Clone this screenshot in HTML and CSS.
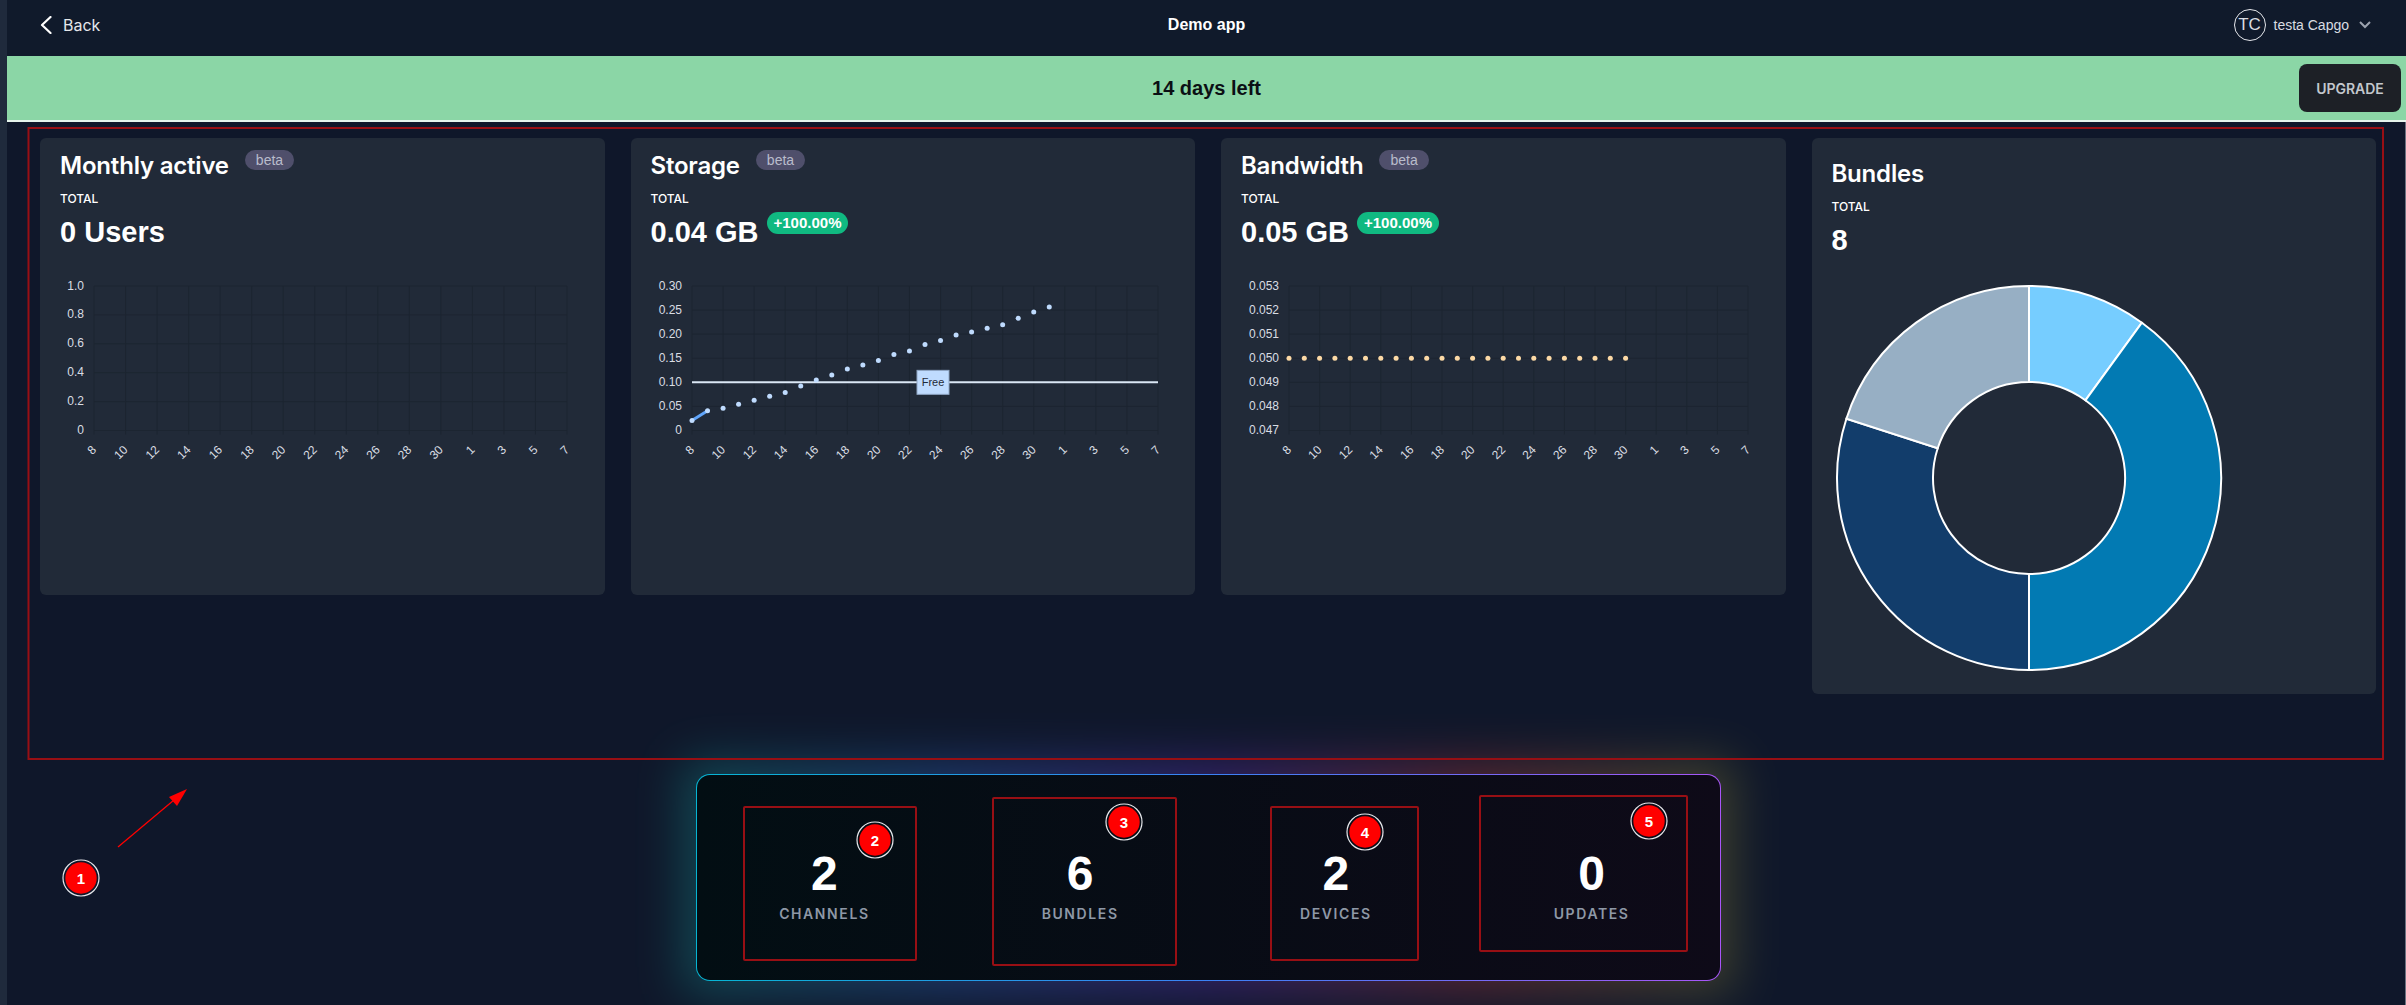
FILE: index.html
```html
<!DOCTYPE html>
<html lang="en">
<head>
    <meta charset="UTF-8">
    <meta name="viewport" content="width=device-width, initial-scale=1.0">
    <title>Demo app</title>
    <link rel="stylesheet" href="styles.css">
</head>
<body>
<div class="app">
    <aside class="sidebar"></aside>
    <main class="main">
        <header class="topbar">
            <a class="back" href="#">
                <svg width="12" height="18" viewBox="0 0 12 18"><path d="M10.5 1 2 9l8.500 8" fill="none" stroke="#fff" stroke-width="2.200" stroke-linecap="round" stroke-linejoin="round"/></svg>
                <span>Back</span>
            </a>
            <div class="app-name">Demo app</div>
            <div class="user">
                <span class="avatar">TC</span>
                <span class="user-name">testa Capgo</span>
                <svg width="12" height="8" viewBox="0 0 12 8"><path d="M1 1l5 5 5-5" fill="none" stroke="#9ca3af" stroke-width="2"/></svg>
            </div>
        </header>

        <div class="banner">
            <div class="banner-text">14 days left</div>
            <button class="upgrade">UPGRADE</button>
        </div>

        <section class="content">
            <div class="cards">
                <div class="card chart-card">
                    <div class="card-title"><h2>Monthly active</h2><span class="beta">beta</span></div>
                    <div class="total">TOTAL</div>
                    <div class="value-row"><span class="value">0 Users</span></div>
                    <svg class="chart" id="usersChart" width="520" height="195"></svg>
                </div>
                <div class="card chart-card">
                    <div class="card-title"><h2>Storage</h2><span class="beta">beta</span></div>
                    <div class="total">TOTAL</div>
                    <div class="value-row"><span class="value">0.04 GB</span><span class="pill">+100.00%</span></div>
                    <svg class="chart" id="storageChart" width="520" height="195"></svg>
                </div>
                <div class="card chart-card">
                    <div class="card-title"><h2>Bandwidth</h2><span class="beta">beta</span></div>
                    <div class="total">TOTAL</div>
                    <div class="value-row"><span class="value">0.05 GB</span><span class="pill">+100.00%</span></div>
                    <svg class="chart" id="bandwidthChart" width="520" height="195"></svg>
                </div>
                <div class="card donut-card">
                    <div class="card-title"><h2>Bundles</h2></div>
                    <div class="total">TOTAL</div>
                    <div class="value-row"><span class="value">8</span></div>
                    <svg class="donut" width="400" height="400" viewBox="0 0 400 400">
                        <g stroke="#fff" stroke-width="2">
                            <path fill="#76cdff" d="M200 8A192 192 0 0 1 312.900 44.700L256.400 122.300A96 96 0 0 0 200 104Z"/>
                            <path fill="#027ab3" d="M312.900 44.700A192 192 0 0 1 200 392V296A96 96 0 0 0 256.400 122.300Z"/>
                            <path fill="#123d6b" d="M200 392A192 192 0 0 1 17.400 140.700L108.700 170.300A96 96 0 0 0 200 296Z"/>
                            <path fill="#97afc4" d="M17.400 140.700A192 192 0 0 1 200 8V104A96 96 0 0 0 108.700 170.300Z"/>
                        </g>
                    </svg>
                </div>
            </div>

            <div class="stats">
                <div class="stat"><div class="stat-num">2</div><div class="stat-label">CHANNELS</div></div>
                <div class="stat"><div class="stat-num">6</div><div class="stat-label">BUNDLES</div></div>
                <div class="stat"><div class="stat-num">2</div><div class="stat-label">DEVICES</div></div>
                <div class="stat"><div class="stat-num">0</div><div class="stat-label">UPDATES</div></div>
            </div>
        </section>
    </main>
</div>

<!-- red markup drawn over the screenshot -->
<svg class="markup" width="2406" height="1005" viewBox="0 0 2406 1005">
    <g class="markup-boxes">
        <rect x="28.500" y="128" width="2354.500" height="631"/>
        <rect x="744" y="807" width="172" height="153" rx="1"/>
        <rect x="993" y="798" width="183" height="167" rx="1"/>
        <rect x="1271" y="807" width="147" height="153" rx="1"/>
        <rect x="1480" y="796" width="207" height="155" rx="1"/>
    </g>
    <line x1="118" y1="847" x2="174" y2="800" stroke="#f00" stroke-width="1.300"/>
    <polygon points="187,789 169,797 177,806" fill="#f00"/>
    <g class="marker"><circle class="ring" cx="81" cy="878" r="18"/><circle class="dot" cx="81" cy="878" r="15.700"/><text x="81" y="883.500">1</text></g>
    <g class="marker"><circle class="ring" cx="875" cy="840" r="18"/><circle class="dot" cx="875" cy="840" r="15.700"/><text x="875" y="845.500">2</text></g>
    <g class="marker"><circle class="ring" cx="1124" cy="822" r="18"/><circle class="dot" cx="1124" cy="822" r="15.700"/><text x="1124" y="827.500">3</text></g>
    <g class="marker"><circle class="ring" cx="1365" cy="832" r="18"/><circle class="dot" cx="1365" cy="832" r="15.700"/><text x="1365" y="837.500">4</text></g>
    <g class="marker"><circle class="ring" cx="1649" cy="821" r="18"/><circle class="dot" cx="1649" cy="821" r="15.700"/><text x="1649" y="826.500">5</text></g>
</svg>

<script src="charts.js"></script>
</body>
</html>
```

FILE: styles.css
```css
* {
    box-sizing: border-box;
}
body {
    margin: 0;
    font-family: Inter, "Liberation Sans", sans-serif;
    background: #0f172a;
    color: #fff;
    overflow: hidden;
}
.app {
    display: flex;
    height: 1005px;
}
.sidebar {
    width: 7px;
    background: #1f2a3c;
}
.main {
    flex: 1;
    display: flex;
    flex-direction: column;
    min-width: 0;
}
.topbar {
    height: 56px;
    padding: 0 33px 6px;
    display: grid;
    grid-template-columns: 1fr auto 1fr;
    align-items: center;
    background: #101a2b;
}
.back {
    display: flex;
    align-items: center;
    gap: 11px;
    color: #e5e7eb;
    font-size: 16px;
    text-decoration: none;
}
.app-name {
    font-family: "Liberation Sans", sans-serif;
    font-size: 16px;
    font-weight: 700;
}
.user {
    display: flex;
    align-items: center;
    justify-content: flex-end;
    margin-right: 2px;
    color: #d9dce1;
    font-family: "Liberation Sans", sans-serif;
    font-size: 14px;
}
.avatar {
    width: 32px;
    height: 32px;
    margin-right: 8px;
    display: flex;
    align-items: center;
    justify-content: center;
    border: 1px solid #e5e7eb;
    border-radius: 50%;
    font-size: 17px;
}
.user-name {
    margin-right: 10px;
}
.banner {
    height: 66px;
    padding: 0 5px;
    display: grid;
    grid-template-columns: 1fr auto 1fr;
    align-items: center;
    background: #8bd6a6;
    border-bottom: 2px solid #e6f4ec;
}
.banner-text {
    grid-column: 2;
    color: #0b0f14;
    font-family: "Liberation Sans", sans-serif;
    font-size: 20px;
    font-weight: 700;
}
.upgrade {
    justify-self: end;
    width: 102px;
    height: 48px;
    border: none;
    border-radius: 8px;
    background: #1d2026;
    color: #c3c7cd;
    font-family: Inter, sans-serif;
    font-size: 14px;
    font-weight: 600;
}
.content {
    flex: 1;
    padding: 16px 29px 0 33px;
    border-right: 1px solid #6b7280;
}
.cards {
    display: grid;
    grid-template-columns: repeat(4, 1fr);
    gap: 26px;
    align-items: start;
}
.card {
    background: #212a38;
    border-radius: 6px;
    padding: 12px 20px 0;
}
.chart-card {
    height: 457px;
}
.donut-card {
    height: 556px;
    padding-top: 20px;
}
.card-title {
    display: flex;
    align-items: flex-start;
    gap: 16px;
}
.card-title h2 {
    margin: 0;
    font-size: 24px;
    line-height: 32px;
    font-weight: 600;
    letter-spacing: -0.2px;
}
.beta {
    height: 20px;
    padding: 0 11px;
    line-height: 20px;
    border-radius: 10px;
    background: #4f4f6b;
    color: #b9bccb;
    font-family: "Liberation Sans", sans-serif;
    font-size: 14px;
}
.total {
    margin-top: 9px;
    font-size: 12px;
    line-height: 16px;
    font-weight: 500;
}
.value-row {
    margin-top: 7px;
    display: flex;
    align-items: flex-start;
    gap: 8px;
}
.value {
    font-family: "Liberation Sans", sans-serif;
    font-size: 29px;
    line-height: 36px;
    font-weight: 700;
}
.pill {
    margin-top: -2px;
    height: 22px;
    padding: 0 7px;
    line-height: 22px;
    border-radius: 11px;
    background: #10b981;
    font-family: "Liberation Sans", sans-serif;
    font-size: 15px;
    font-weight: 700;
}
.chart {
    display: block;
    margin-top: 20px;
}
.chart text {
    font-family: "Liberation Sans", sans-serif;
    font-size: 12px;
    fill: #d9dde3;
}
.chart .free-label {
    font-size: 11px;
    fill: #1f2937;
    text-anchor: middle;
}
.donut {
    display: block;
    margin: 20px 0 0 -3px;
}
.stats {
    position: relative;
    width: 1025px;
    height: 207px;
    margin: 80px auto 0;
    padding: 75px 0 0;
    display: grid;
    grid-template-columns: repeat(4, 1fr);
    align-content: start;
    border: 1px solid transparent;
    border-radius: 14px;
    background:
        linear-gradient(90deg, #020e13, #0e0a18) padding-box,
        linear-gradient(90deg, #06b6d4, #3b82f6, #a855f7) border-box;
}
/* coloured glow behind the panel */
.stats::before {
    content: "";
    position: absolute;
    inset: -14px;
    z-index: -1;
    background: linear-gradient(90deg, #14b8a6, #3b82f6, #7c3aed, #ef4444, #a3a335);
    filter: blur(24px);
    opacity: 0.3;
}
.stat {
    text-align: center;
}
.stat-num {
    font-family: "Liberation Sans", sans-serif;
    font-size: 48px;
    line-height: 48px;
    font-weight: 700;
}
.stat-label {
    margin-top: 6px;
    color: #8e98a6;
    font-size: 14px;
    line-height: 20px;
    font-weight: 600;
    letter-spacing: 1.600px;
}
.markup {
    position: absolute;
    top: 0;
    left: 0;
    pointer-events: none;
}
.markup-boxes rect {
    fill: none;
    stroke: #980f14;
    stroke-width: 2;
}
.marker .ring {
    fill: none;
    stroke: #e5e7eb;
    stroke-width: 1.200;
}
.marker .dot {
    fill: #f00;
}
.marker text {
    fill: #fff;
    font-family: "Liberation Sans", sans-serif;
    font-size: 15px;
    font-weight: 700;
    text-anchor: middle;
}
```

FILE: charts.js
```js
// small line chart drawing, same look as the dashboard charts
const NS = "http://www.w3.org/2000/svg";
const TOP = 16;
const BOTTOM = 160.5;
const RIGHT = 507;
const GRID = "#1c2531";
const DAYS = [8, 10, 12, 14, 16, 18, 20, 22, 24, 26, 28, 30, 1, 3, 5, 7];

function add(svg, tag, attrs, text) {
    const el = document.createElementNS(NS, tag);
    for (const key in attrs) el.setAttribute(key, attrs[key]);
    if (text) el.textContent = text;
    svg.appendChild(el);
    return el;
}

function drawChart(id, opts) {
    const svg = document.getElementById(id);
    const left = opts.left;
    const stepX = (RIGHT - left) / 30;
    const stepY = (BOTTOM - TOP) / (opts.ticks.length - 1);
    const yOf = v => BOTTOM - (v - opts.min) / (opts.max - opts.min) * (BOTTOM - TOP);

    opts.ticks.forEach((label, i) => {
        const y = TOP + i * stepY;
        add(svg, "line", { x1: left, x2: RIGHT, y1: y, y2: y, stroke: GRID });
        add(svg, "text", { x: left - 10, y: y + 3.5, "text-anchor": "end" }, label);
    });

    DAYS.forEach((day, i) => {
        const x = left + i * 2 * stepX;
        add(svg, "line", { x1: x, x2: x, y1: TOP, y2: BOTTOM + 4, stroke: GRID });
        add(svg, "text", {
            x: x,
            y: BOTTOM + 17,
            dy: "0.35em",
            "text-anchor": "end",
            transform: `rotate(-45 ${x} ${BOTTOM + 17})`
        }, String(day));
    });

    if (opts.limit) {
        const y = yOf(opts.limit);
        add(svg, "line", { x1: left, x2: RIGHT, y1: y, y2: y, stroke: "#dbe7f5", "stroke-width": 2 });
        add(svg, "rect", { x: 266, y: y - 12, width: 32, height: 24, fill: "#bfdbfe", stroke: "#8fa6c4" });
        add(svg, "text", { class: "free-label", x: 282, y: y + 4 }, "Free");
    }

    if (opts.data) {
        add(svg, "line", {
            x1: left, y1: yOf(opts.data[0]),
            x2: left + stepX, y2: yOf(opts.data[1]),
            stroke: opts.line || "none", "stroke-width": 3
        });
        opts.data.forEach((v, i) => {
            add(svg, "circle", { cx: left + i * stepX, cy: yOf(v), r: 2.5, fill: opts.color });
        });
    }
}

drawChart("usersChart", {
    left: 34, min: 0, max: 1,
    ticks: ["1.0", "0.8", "0.6", "0.4", "0.2", "0"]
});

drawChart("storageChart", {
    left: 41, min: 0, max: 0.3, limit: 0.1,
    ticks: ["0.30", "0.25", "0.20", "0.15", "0.10", "0.05", "0"],
    color: "#bfdbfe", line: "#60a5fa",
    data: [0.0207, 0.0408, 0.0463, 0.0546, 0.0629, 0.0712, 0.0788, 0.0926, 0.105, 0.1154, 0.1279, 0.1362,
        0.1452, 0.1576, 0.1652, 0.1783, 0.1866, 0.1984, 0.2046, 0.2122, 0.2198, 0.2329, 0.2461, 0.2564]
});

drawChart("bandwidthChart", {
    left: 48, min: 0.047, max: 0.053,
    ticks: ["0.053", "0.052", "0.051", "0.050", "0.049", "0.048", "0.047"],
    color: "#fcd9a5",
    data: new Array(23).fill(0.05)
});
```
